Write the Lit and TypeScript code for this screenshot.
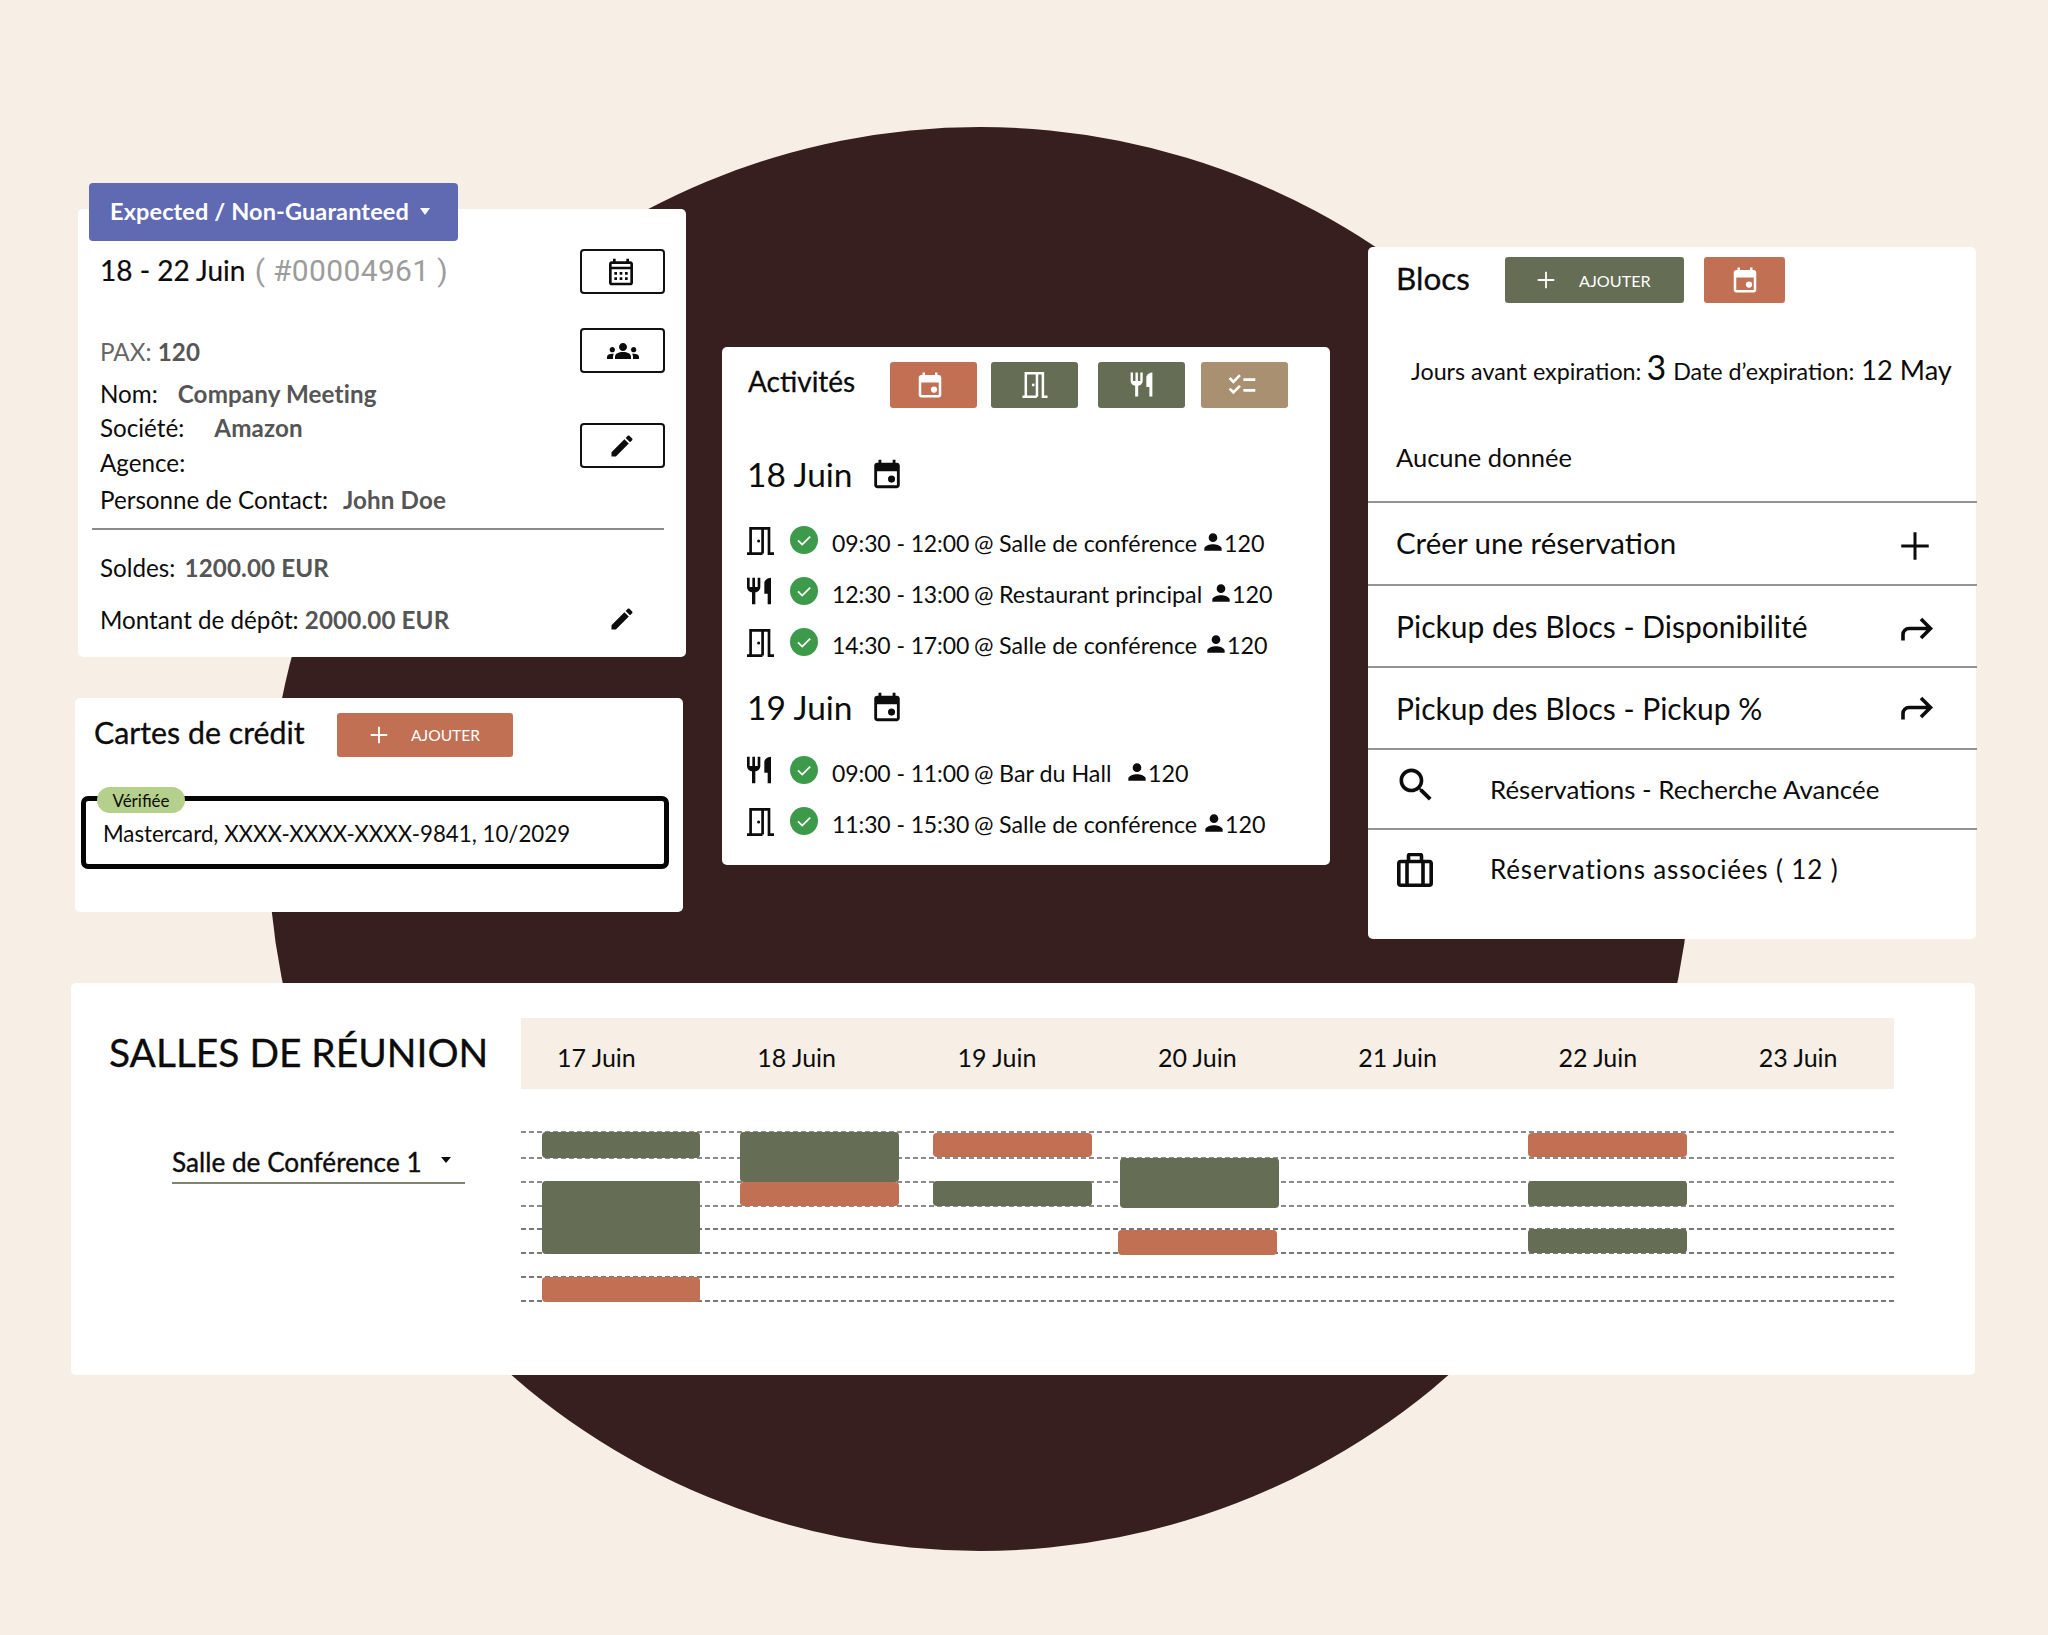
import { LitElement, html, css } from "lit";
import { customElement } from "lit/decorators.js";

const P = {
  restaurant: "M11 9H9V2H7v7H5V2H3v7c0 2.12 1.66 3.84 3.75 3.97V22h2.5v-9.03C11.34 12.84 13 11.12 13 9V2h-2v7zm5-3v8h2.5v8H21V2c-2.76 0-5 2.24-5 4z",
  checklist: "M22 7h-9v2h9V7zm0 8h-9v2h9v-2zM5.54 11L2 7.46l1.41-1.41 2.12 2.12 4.24-4.24 1.41 1.41L5.54 11zm0 8L2 15.46l1.41-1.41 2.12 2.12 4.24-4.24 1.41 1.41L5.54 19z",
  person: "M12 12c2.21 0 4-1.79 4-4s-1.79-4-4-4-4 1.79-4 4 1.79 4 4 4zm0 2c-2.67 0-8 1.34-8 4v2h16v-2c0-2.66-5.33-4-8-4z",
  groups: "M12 12.75c1.63 0 3.07.39 4.24.9 1.08.48 1.76 1.56 1.76 2.73V18H6v-1.61c0-1.18.68-2.26 1.76-2.73 1.17-.52 2.61-.91 4.24-.91zM4 13c1.1 0 2-.9 2-2s-.9-2-2-2-2 .9-2 2 .9 2 2 2zm1.13 1.1c-.37-.06-.74-.1-1.13-.1-.99 0-1.93.21-2.78.58C.48 14.9 0 15.62 0 16.43V18h4.5v-1.61c0-.83.23-1.61.63-2.29zM20 13c1.1 0 2-.9 2-2s-.9-2-2-2-2 .9-2 2 .9 2 2 2zm4 3.43c0-.81-.48-1.53-1.22-1.85-.85-.37-1.79-.58-2.78-.58-.39 0-.76.04-1.13.1.4.68.63 1.46.63 2.29V18H24v-1.57zM12 6c1.66 0 3 1.34 3 3s-1.34 3-3 3-3-1.34-3-3 1.34-3 3-3z",
  edit: "M3 17.25V21h3.75L17.81 9.94l-3.75-3.75L3 17.25zM20.71 7.04c.39-.39.39-1.02 0-1.41l-2.34-2.34c-.39-.39-1.02-.39-1.41 0l-1.83 1.83 3.75 3.75 1.83-1.83z",
  month: "M19 4h-1V2h-2v2H8V2H6v2H5c-1.11 0-1.99.9-1.99 2L3 20c0 1.1.89 2 2 2h14c1.1 0 2-.9 2-2V6c0-1.1-.9-2-2-2zm0 16H5V10h14v10zm0-12H5V6h14v2zM9 14H7v-2h2v2zm4 0h-2v-2h2v2zm4 0h-2v-2h2v2zm-8 4H7v-2h2v2zm4 0h-2v-2h2v2zm4 0h-2v-2h2v2z",
  search: "M15.5 14h-.79l-.28-.27C15.41 12.59 16 11.11 16 9.5 16 5.91 13.09 3 9.5 3S3 5.91 3 9.5 5.91 16 9.5 16c1.61 0 3.09-.59 4.23-1.57l.27.28v.79l5 4.99L20.49 19l-4.99-5zm-6 0C7.01 14 5 11.99 5 9.5S7.01 5 9.5 5 14 7.01 14 9.5 11.99 14 9.5 14z",
  event: "M19 4h-1V2h-2v2H8V2H6v2H5C3.9 4 3 4.9 3 6v14c0 1.1.9 2 2 2h14c1.1 0 2-.9 2-2V6c0-1.1-.9-2-2-2zm0 16H5V10h14v10z",
};

const fill = (d: string, cls: string) => html`<svg class=${cls} viewBox="0 0 24 24" fill="currentColor"><path d=${d}></path></svg>`;
const event = (cls: string) => html`<svg class=${cls} viewBox="0 0 24 24" fill="currentColor"><path d=${P.event}></path><circle cx="15.2" cy="15.6" r="2.5"></circle></svg>`;
const door = (cls: string) => html`<svg class=${cls} viewBox="0 0 27 28" fill="none" stroke="currentColor" stroke-width="2.7"><path d="M0 26.6h15.5M3.6 26.6V1.4h12v25.2M15.6 1.4h6.4v25.2h5"></path><circle cx="11.6" cy="14" r="1.5" fill="currentColor" stroke="none"></circle></svg>`;
const plus = (cls: string) => html`<svg class=${cls} viewBox="0 0 24 24" fill="none" stroke="currentColor" stroke-width="2.4"><path d="M12 1v22M1 12h22"></path></svg>`;
const arrow = () => html`<svg class="arrow" viewBox="0 0 32 24" fill="none" stroke="currentColor" stroke-width="3.6"><path d="M2 23.5v-6a6 6 0 0 1 6-6h21M20 2l9.5 9.5L20 21"></path></svg>`;
const suitcase = () => html`<svg class="case" viewBox="0 0 36 34" fill="none" stroke="currentColor" stroke-width="3.6"><rect x="1.8" y="8.5" width="32.4" height="23.7" rx="2"></rect><path d="M10 8.5v24M26 8.5v24M11.5 8.5V3a1.5 1.5 0 0 1 1.5-1.5h10a1.5 1.5 0 0 1 1.5 1.5v5.5"></path></svg>`;
const check = () => html`<svg class="check" viewBox="0 0 28 28"><circle cx="14" cy="14" r="14" fill="#3d9a4b"></circle><path d="M8 14.4l4.2 4.2 8-8" fill="none" stroke="#fff" stroke-width="1.8"></path></svg>`;

const DAYS = [
  { label: "18 Juin", rows: [
    { k: "door", t: "09:30 - 12:00", l: "Salle de conférence", w: 204 },
    { k: "food", t: "12:30 - 13:00", l: "Restaurant principal", w: 212 },
    { k: "door", t: "14:30 - 17:00", l: "Salle de conférence", w: 207 },
  ]},
  { label: "19 Juin", rows: [
    { k: "food", t: "09:00 - 11:00", l: "Bar du Hall", w: 128 },
    { k: "door", t: "11:30 - 15:30", l: "Salle de conférence", w: 205 },
  ]},
];

const DATES = ["17 Juin", "18 Juin", "19 Juin", "20 Juin", "21 Juin", "22 Juin", "23 Juin"];
const LINES = [0, 26, 50, 74, 97, 121, 145, 169];
const BLOCKS = [
  { c: "g", x: 542, y: 1132, r: 700, b: 1158 },
  { c: "g", x: 542, y: 1181, r: 700, b: 1254 },
  { c: "o", x: 542, y: 1277, r: 700, b: 1302 },
  { c: "o", x: 740, y: 1182, r: 899, b: 1206 },
  { c: "g", x: 740, y: 1132, r: 899, b: 1182 },
  { c: "o", x: 933, y: 1133, r: 1092, b: 1157 },
  { c: "g", x: 933, y: 1181, r: 1092, b: 1206 },
  { c: "g", x: 1120, y: 1158, r: 1279, b: 1208 },
  { c: "o", x: 1118, y: 1230, r: 1277, b: 1255 },
  { c: "o", x: 1528, y: 1133, r: 1687, b: 1157 },
  { c: "g", x: 1528, y: 1181, r: 1687, b: 1206 },
  { c: "g", x: 1528, y: 1229, r: 1687, b: 1253 },
];

@customElement("app-root")
export class AppRoot extends LitElement {
  static styles = css`
    :host { display: block; }
    * { box-sizing: border-box; }
    svg { display: block; flex: none; }
    .page {
      position: relative; width: 2048px; height: 1635px; overflow: hidden; background: #f7efe5;
      padding-top: 209px; color: #0c0c0c; font-family: "Lato", "Liberation Sans", sans-serif; font-size: 24.2px;
    }
    .circle { position: absolute; left: 268px; top: 127px; width: 1424px; height: 1424px; border-radius: 50%; background: #361f1e; }
    .top { position: relative; display: grid; grid-template-columns: 644px 646px 608px; padding-left: 78px; align-items: start; }
    .card { background: #fff; border-radius: 5px; position: relative; }

    /* booking card */
    .booking { width: 608px; height: 448px; padding-top: 43px; }
    .status {
      position: absolute; left: 11px; top: -26px; width: 369px; height: 58px; background: #5f6ab3; color: #fff; border-radius: 4px;
      display: flex; align-items: center; padding: 0 0 2px 21px; font-size: 23.5px; font-weight: 700; letter-spacing: .12px;
    }
    .caret { width: 0; height: 0; border: 5.5px solid transparent; border-top: 7px solid currentColor; border-bottom: 0; }
    .status .caret { margin-left: 11px; }
    .upper { display: flex; justify-content: space-between; height: 276px; padding: 0 21px 0 22px; }
    .title { font-size: 28px; line-height: 36px; height: 36px; white-space: nowrap; -webkit-text-stroke: .2px; }
    .ref { color: #9c9c9c; font-family: "Roboto", sans-serif; font-weight: 400; font-size: 30px; letter-spacing: .35px; margin-left: 2px; -webkit-text-stroke: 0; }
    .info { margin-top: 46px; display: grid; grid-template-rows: 34px 42px 34px 36px 39px; }
    .info > div { display: flex; align-items: center; white-space: nowrap; }
    .pax { color: #666; }
    .nom { margin-top: 8px; }
    .val { color: #555; font-weight: 700; letter-spacing: .12px; }
    .sp-nom { margin-left: 20px; }
    .sp-soc { margin-left: 30px; }
    .sp-con { margin-left: 15px; }
    .sp-sol { margin-left: 3px; }
    .tools { display: flex; flex-direction: column; }
    .tool { width: 85px; height: 45px; border: 2.5px solid #111; border-radius: 4px; display: flex; align-items: center; justify-content: center; background: #fff; }
    .tool.t0 { margin-top: -3px; }
    .tool.t1 { margin-top: 34px; }
    .tool.t2 { margin-top: 50px; }
    .tool.t0 svg { margin-right: 4px; }
    .tool.t2 svg { margin-right: 1px; }
    .i32 { width: 32px; height: 32px; }
    .i28 { width: 28px; height: 28px; }
    .rule { height: 2px; background: #8a8a8a; margin-left: 14px; margin-right: 22px; }
    .lower { padding: 19px 21px 0 22px; }
    .soldes { height: 36px; display: flex; align-items: center; white-space: nowrap; }
    .depot { height: 36px; margin-top: 16px; display: flex; align-items: center; justify-content: space-between; white-space: nowrap; padding-right: 29px; }

    /* credit */
    .credit { width: 608px; height: 214px; margin: 41px 0 0 -3px; padding-top: 15px; }
    .credit-head { display: flex; align-items: flex-start; padding-left: 19px; }
    .h2 { font-size: 30.3px; line-height: 38px; white-space: nowrap; -webkit-text-stroke: .3px; }
    .credit-head .h2 { width: 243px; }
    .add { width: 176px; height: 44px; border-radius: 3px; color: #fff; display: flex; align-items: center; padding-left: 33px; gap: 23px; font-size: 15.6px; }
    .add .pl { width: 18px; height: 18px; }
    .orange { background: #c17054; }
    .green { background: #656d55; }
    .tan { background: #a89070; }
    .cardbox { position: relative; margin: 39px 0 0 6px; width: 588px; height: 73px; border: 5px solid #050505; border-radius: 7px; display: flex; align-items: center; padding: 2px 0 0 17px; font-size: 22.3px; white-space: nowrap; }
    .badge { position: absolute; left: 11px; top: -14px; width: 88px; height: 26px; background: #b5cf8c; border-radius: 13px; display: flex; align-items: center; justify-content: center; font-size: 17px; }

    /* activities */
    .act { width: 608px; height: 518px; margin-top: 138px; padding: 15px 0 0 26px; }
    .act-head { display: flex; align-items: flex-start; height: 46px; }
    .act-head .h2 { width: 142px; line-height: 38px; font-size: 28px; }
    .sq { width: 87px; height: 46px; border-radius: 3px; color: #fff; display: flex; align-items: center; justify-content: center; }
    .m14 { margin-left: 14px; } .m20 { margin-left: 20px; } .m16 { margin-left: 16px; }
    .sq.orange .i30 { margin-right: 7px; }
    .i30 { width: 30px; height: 30px; }
    .bdoor { width: 26px; height: 26px; }
    .bfood { width: 29px; height: 29px; margin-top: -2px; }
    .bcheck { width: 32px; height: 32px; margin-right: 5px; }
    .day { display: flex; align-items: center; height: 48px; margin-left: -1px; font-size: 33.5px; white-space: nowrap; }
    .day svg { margin-left: 17px; width: 34px; height: 34px; }
    .d0 { margin-top: 42px; }
    .d1 { margin-top: 13px; }
    .rows { padding-top: 19px; display: flex; flex-direction: column; }
    .d1 + .rows { padding-top: 16px; }
    .row { height: 51px; display: flex; align-items: center; white-space: nowrap; font-size: 23.3px; }
    .door { width: 27px; height: 28px; margin-left: -1px; margin-top: -3px; }
    .food { width: 32px; height: 32px; margin: -5px -1px 0 -5px; }
    .check { width: 28px; height: 28px; margin: -5px 0 0 16px; }
    .time { margin-left: 14px; width: 142px; font-size: 23px; letter-spacing: -.1px; }
    .at { width: 25px; }
    .who { display: flex; align-items: center; }
    .who svg { width: 26px; height: 26px; margin: -2px -2px 0 -3px; }

    /* blocs */
    .blocs { width: 608px; height: 692px; margin-top: 38px; }
    .blocs-head { display: flex; align-items: flex-start; padding: 10px 0 0 28px; height: 56px; }
    .blocs-head .h2 { width: 109px; line-height: 42px; font-size: 31.4px; }
    .blocs-head .add { width: 179px; height: 46px; padding-left: 32px; gap: 24px; font-size: 16.2px; }
    .blocs-head .sq { width: 81px; margin-left: 20px; }
    .blocs-head .sq .i30 { margin-right: 1px; margin-left: 2px; }
    .expiry { display: flex; align-items: baseline; margin: 43px 0 0 43px; height: 44px; white-space: nowrap; font-size: 23.3px; }
    .big { font-size: 34px; margin: 0 7px 0 5px; }
    .big2 { font-size: 27.2px; margin-left: 7px; }
    .none { margin: 49px 0 0 28px; height: 36px; line-height: 36px; font-size: 25.5px; }
    .menu { margin-top: 26px; margin-right: -1px; }
    .item { height: 82px; border-top: 2px solid #949494; display: flex; align-items: center; padding-left: 28px; white-space: nowrap; font-size: 29.5px; }
    .item.sm { height: 80px; font-size: 25.9px; padding-left: 122px; position: relative; }
    .item.sm.wide { font-size: 26px; letter-spacing: .85px; }
    .item.arr { justify-content: space-between; padding-right: 44px; font-size: 30px; }
    .item.first { height: 83px; justify-content: space-between; padding: 0 47px 2px 28px; }
    .item .pls { width: 30px; height: 30px; margin-top: 6px; }
    .arrow { width: 32px; height: 24px; margin-top: 6px; }
    .item.arr.p2 .arrow { margin-top: 0; }
    .s-ic { position: absolute; left: 28px; }
    .search { width: 44px; height: 44px; margin: -8px 0 0 -2px; }
    .case { width: 36px; height: 34px; margin: 2px 0 0 1px; }

    /* rooms */
    .rooms { position: relative; display: flex; width: 1904px; height: 392px; margin: 44px 0 0 71px; padding-top: 35px; }
    .rooms-left { width: 450px; padding-left: 38px; }
    .rooms-title { font-size: 38.9px; line-height: 68px; white-space: nowrap; -webkit-text-stroke: .3px; }
    .select { width: 293px; height: 42px; margin: 56px 0 0 63px; border-bottom: 2px solid #80836f; display: flex; align-items: center; justify-content: space-between; padding: 0 14px 1px 0; font-size: 26.2px; font-weight: 400; white-space: nowrap; -webkit-text-stroke: .35px; }
    .select .caret { margin-top: -4px; border-width: 5px; border-top-width: 6px; }
    .rooms-right { width: 1373px; }
    .strip { height: 71px; background: #f7efe5; display: grid; grid-template-columns: repeat(7, 200.3px); align-items: center; padding-top: 6px; padding-left: 36px; font-size: 25px; white-space: nowrap; }
    .tl { position: relative; height: 172px; margin-top: 43px; }
    .line { position: absolute; left: 0; right: 0; height: 2px; background: repeating-linear-gradient(90deg, #8a8a8a 0 5px, transparent 5px 8px); }
    .line.thin { height: 1.5px; background: repeating-linear-gradient(90deg, #777 0 5px, transparent 5px 8px); }
    .bar { position: absolute; border-radius: 4px; }
    .bar.g { background: #656d55; }
    .bar.o { background: #c17054; }
  `;

  private actRow(r: { k: string; t: string; l: string; w: number }) {
    return html`<div class="row">
      ${r.k === "door" ? door("door") : fill(P.restaurant, "food")}
      ${check()}
      <span class="time">${r.t}</span><span class="at">@</span>
      <span style="width:${r.w}px">${r.l}</span>
      <span class="who">${fill(P.person, "")}120</span>
    </div>`;
  }

  render() {
    return html`<div class="page">
      <div class="circle"></div>
      <div class="top">
        <div>
          <section class="card booking">
            <div class="status">Expected / Non-Guaranteed<span class="caret"></span></div>
            <div class="upper">
              <div>
                <div class="title">18 - 22 Juin <span class="ref">( #00004961 )</span></div>
                <div class="info">
                  <div class="pax">PAX:&nbsp;<span class="val">120</span></div>
                  <div class="nom">Nom:<span class="val sp-nom">Company Meeting</span></div>
                  <div>Société:<span class="val sp-soc">Amazon</span></div>
                  <div>Agence:</div>
                  <div>Personne de Contact:<span class="val sp-con">John Doe</span></div>
                </div>
              </div>
              <div class="tools">
                <div class="tool t0">${fill(P.month, "i32")}</div>
                <div class="tool t1">${fill(P.groups, "i32")}</div>
                <div class="tool t2">${fill(P.edit, "i28")}</div>
              </div>
            </div>
            <div class="rule"></div>
            <div class="lower">
              <div class="soldes">Soldes:&nbsp;<span class="val sp-sol">1200.00 EUR</span></div>
              <div class="depot"><span>Montant de dépôt:&nbsp;<span class="val">2000.00 EUR</span></span>${fill(P.edit, "i28")}</div>
            </div>
          </section>
          <section class="card credit">
            <div class="credit-head">
              <div class="h2">Cartes de crédit</div>
              <div class="add orange">${plus("pl")}<span>AJOUTER</span></div>
            </div>
            <div class="cardbox"><span class="badge">Vérifiée</span>Mastercard, XXXX-XXXX-XXXX-9841, 10/2029</div>
          </section>
        </div>

        <section class="card act">
          <div class="act-head">
            <div class="h2">Activités</div>
            <div class="sq orange">${event("i30")}</div>
            <div class="sq green m14">${door("bdoor")}</div>
            <div class="sq green m20">${fill(P.restaurant, "bfood")}</div>
            <div class="sq tan m16">${fill(P.checklist, "bcheck")}</div>
          </div>
          ${DAYS.map((d, i) => html`
            <div class="day d${i}">${d.label}${event("")}</div>
            <div class="rows">${d.rows.map((r) => this.actRow(r))}</div>
          `)}
        </section>

        <section class="card blocs">
          <div class="blocs-head">
            <div class="h2">Blocs</div>
            <div class="add green">${plus("pl")}<span>AJOUTER</span></div>
            <div class="sq orange">${event("i30")}</div>
          </div>
          <div class="expiry">Jours avant expiration:<span class="big">3</span>Date d’expiration:<span class="big2">12 May</span></div>
          <div class="none">Aucune donnée</div>
          <div class="menu">
            <div class="item first">Créer une réservation${plus("pls")}</div>
            <div class="item arr">Pickup des Blocs - Disponibilité${arrow()}</div>
            <div class="item arr p2">Pickup des Blocs - Pickup %${arrow()}</div>
            <div class="item sm"><span class="s-ic">${fill(P.search, "search")}</span>Réservations - Recherche Avancée</div>
            <div class="item sm wide"><span class="s-ic">${suitcase()}</span>Réservations associées ( 12 )</div>
          </div>
        </section>
      </div>

      <section class="card rooms">
        <div class="rooms-left">
          <div class="rooms-title">SALLES DE RÉUNION</div>
          <div class="select">Salle de Conférence 1<span class="caret"></span></div>
        </div>
        <div class="rooms-right">
          <div class="strip">${DATES.map((d) => html`<div>${d}</div>`)}</div>
          <div class="tl">
            ${LINES.map((y, i) => html`<div class="line ${i > 3 ? "thin" : ""}" style="top:${y - 1}px"></div>`)}
            ${BLOCKS.map((b) => html`<div class="bar ${b.c}" style="left:${b.x - 521}px;top:${b.y - 1132}px;width:${b.r - b.x}px;height:${b.b - b.y}px"></div>`)}
          </div>
        </div>
      </section>
    </div>`;
  }
}
